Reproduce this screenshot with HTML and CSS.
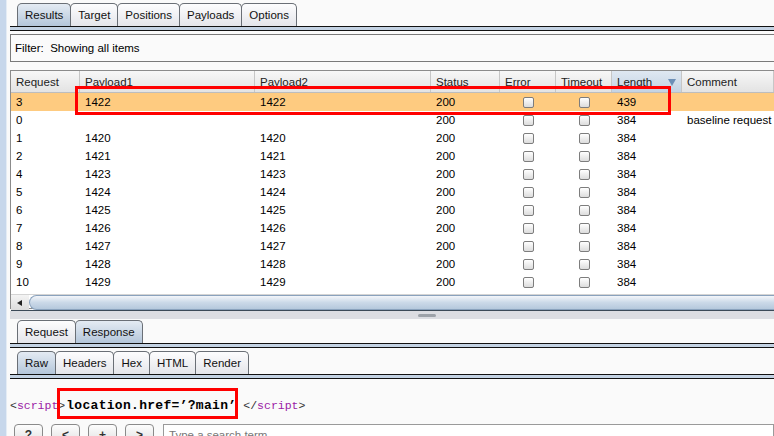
FILE: index.html
```html
<!DOCTYPE html>
<html>
<head>
<meta charset="utf-8">
<link rel="stylesheet" href="styles.css">
</head>
<body>
<div class="app">
  <div class="strip"></div>
  <div class="main">
    <div class="tabbar top">
      <div class="tab sel">Results</div>
      <div class="tab">Target</div>
      <div class="tab">Positions</div>
      <div class="tab">Payloads</div>
      <div class="tab">Options</div>
    </div>
    <div class="band"></div>
    <div class="filter">Filter:&nbsp; Showing all items</div>
    <div class="table">
      <div class="hl-box"></div>
      <div class="row head">
        <div class="c">Request</div><div class="c">Payload1</div><div class="c">Payload2</div><div class="c">Status</div><div class="c">Error</div><div class="c">Timeout</div><div class="c sorted">Length<span class="arrow"></span></div><div class="c">Comment</div>
      </div>
      <div class="row selrow"><div class="c">3</div><div class="c">1422</div><div class="c">1422</div><div class="c">200</div><div class="c ck"><span class="box"></span></div><div class="c ck"><span class="box"></span></div><div class="c">439</div><div class="c"></div></div>
      <div class="row"><div class="c">0</div><div class="c"></div><div class="c"></div><div class="c">200</div><div class="c ck"><span class="box"></span></div><div class="c ck"><span class="box"></span></div><div class="c">384</div><div class="c">baseline request</div></div>
      <div class="row"><div class="c">1</div><div class="c">1420</div><div class="c">1420</div><div class="c">200</div><div class="c ck"><span class="box"></span></div><div class="c ck"><span class="box"></span></div><div class="c">384</div><div class="c"></div></div>
      <div class="row"><div class="c">2</div><div class="c">1421</div><div class="c">1421</div><div class="c">200</div><div class="c ck"><span class="box"></span></div><div class="c ck"><span class="box"></span></div><div class="c">384</div><div class="c"></div></div>
      <div class="row"><div class="c">4</div><div class="c">1423</div><div class="c">1423</div><div class="c">200</div><div class="c ck"><span class="box"></span></div><div class="c ck"><span class="box"></span></div><div class="c">384</div><div class="c"></div></div>
      <div class="row"><div class="c">5</div><div class="c">1424</div><div class="c">1424</div><div class="c">200</div><div class="c ck"><span class="box"></span></div><div class="c ck"><span class="box"></span></div><div class="c">384</div><div class="c"></div></div>
      <div class="row"><div class="c">6</div><div class="c">1425</div><div class="c">1425</div><div class="c">200</div><div class="c ck"><span class="box"></span></div><div class="c ck"><span class="box"></span></div><div class="c">384</div><div class="c"></div></div>
      <div class="row"><div class="c">7</div><div class="c">1426</div><div class="c">1426</div><div class="c">200</div><div class="c ck"><span class="box"></span></div><div class="c ck"><span class="box"></span></div><div class="c">384</div><div class="c"></div></div>
      <div class="row"><div class="c">8</div><div class="c">1427</div><div class="c">1427</div><div class="c">200</div><div class="c ck"><span class="box"></span></div><div class="c ck"><span class="box"></span></div><div class="c">384</div><div class="c"></div></div>
      <div class="row"><div class="c">9</div><div class="c">1428</div><div class="c">1428</div><div class="c">200</div><div class="c ck"><span class="box"></span></div><div class="c ck"><span class="box"></span></div><div class="c">384</div><div class="c"></div></div>
      <div class="row"><div class="c">10</div><div class="c">1429</div><div class="c">1429</div><div class="c">200</div><div class="c ck"><span class="box"></span></div><div class="c ck"><span class="box"></span></div><div class="c">384</div><div class="c"></div></div>
      <div class="hscroll">
        <div class="sbtn"><svg width="8" height="8" viewBox="0 0 8 8"><path d="M1 4 L6 1 L6 7 Z" fill="#222"/></svg></div>
        <div class="thumb"></div>
      </div>
    </div>
    <div class="splitter"><span class="grip"></span></div>
    <div class="tabbar sub">
      <div class="tab">Request</div>
      <div class="tab sel">Response</div>
    </div>
    <div class="band"></div>
    <div class="tabbar sub2">
      <div class="tab sel">Raw</div>
      <div class="tab">Headers</div>
      <div class="tab">Hex</div>
      <div class="tab">HTML</div>
      <div class="tab">Render</div>
    </div>
    <div class="band"></div>
    <div class="code">
      <span class="p">&lt;</span><span class="tag">script</span><span class="p">&gt;</span><span class="js">location.href=’?main’</span> <span class="p">&lt;/</span><span class="tag">script</span><span class="p">&gt;</span>
      <div class="hl-code"></div>
    </div>
    <div class="bottom">
      <div class="btn">?</div>
      <div class="btn">&lt;</div>
      <div class="btn">+</div>
      <div class="btn">&gt;</div>
      <div class="search">Type a search term</div>
    </div>
  </div>
</div>
</body>
</html>
```

FILE: styles.css
```css
* { box-sizing: border-box; }
html, body { margin: 0; padding: 0; }
body {
  width: 774px; height: 436px; overflow: hidden;
  background: #fafafa;
  font-family: "Liberation Sans", Arial, sans-serif;
  font-size: 12px; color: #000;
}
.app { display: flex; height: 436px; }
.strip { width: 7px; flex: none; background: #c7d7eb; border-right: 1px solid #e4ecf5; }
.main { flex: 1; padding-left: 3px; display: flex; flex-direction: column; min-width: 0; }

.tabbar { display: flex; flex: none; padding-left: 7px; height: 23px; align-items: flex-end; }
.tabbar.top { margin-top: 3px; }
.tab {
  height: 23px; padding: 0 7px; line-height: 22px;
  border: 1px solid #6a6f76; border-bottom: none;
  border-radius: 5px 5px 0 0;
  background: linear-gradient(#fdfdfe, #e4e5ea);
  margin-right: -1px; font-size: 11.5px; color: #111;
}
.tab.sel { background: linear-gradient(#e4ebf3, #b4c6da); }
.band { flex: none; height: 5px; border-top: 1px solid #111; border-bottom: 1px solid #111; background: #c3d2e3; }

.filter {
  flex: none;
  margin-top: 3px; height: 28px; line-height: 26px;
  border: 1px solid #7a7a7a; border-right: none;
  padding-left: 4px; font-size: 11.5px; background: #fafafa;
}
.table {
  flex: none;
  position: relative;
  margin-top: 8px; border: 1px solid #8b8b8b; border-right: none;
  background: #fff; height: 239px;
}
.row {
  display: grid;
  grid-template-columns: 69px 175px 176px 69px 56px 56px 70px 1fr;
  height: 18px; align-items: center;
}
.row .c { padding-left: 5px; white-space: nowrap; overflow: hidden; font-size: 11.5px; }
.row.head { height: 22px; background: linear-gradient(#f7f7f7, #e3e3e3); border-bottom: 1px solid #bdbdbd; }
.row.head .c { height: 21px; line-height: 22px; border-right: 1px solid #c6c6c6; color: #222; }
.row.head .c.sorted { background: linear-gradient(#dfe8f2, #c4d3e3); position: relative; }
.arrow { position: absolute; right: 5px; top: 8px; width: 0; height: 0; border-left: 4px solid transparent; border-right: 4px solid transparent; border-top: 7px solid #6d8fb6; }
.selrow { background: #fecb80; }
.ck { display: flex; justify-content: center; padding-left: 0 !important; }
.box {
  width: 11px; height: 11px; border: 1px solid #7d7d7d; border-radius: 2px;
  background: linear-gradient(#ffffff, #dcdcdc);
  margin-left: 1px;
}
.hscroll { display: flex; height: 17px; margin-top: 3px; border-top: 1px solid #d4d4d4; border-bottom: 1px solid #3c4a58; }
.sbtn { width: 18px; display: flex; align-items: center; justify-content: center; background: linear-gradient(#f4f4f4, #dcdcdc); }
.thumb { flex: 1; border-radius: 8px 0 0 8px; border: 1px solid #8aa2bd; border-right: none; background: linear-gradient(#f3f6fa, #cbd9e8 50%, #b5c8dc); }
.hl-box { position: absolute; left: 64px; top: 15px; width: 596px; height: 29px; border: 3px solid #ff0000; z-index: 2; }

.splitter { flex: none; height: 8px; margin-top: 2px; background: #dcdde2; position: relative; }
.grip { position: absolute; left: 408px; top: 3px; width: 18px; height: 3px; border-radius: 2px; background: #9da2a9; }
.tabbar.sub { margin-top: 1px; }
.tabbar.sub2 { margin-top: 3px; }

.code { flex: none; position: relative; height: 45px; padding-top: 19px; font-family: "Liberation Mono", monospace; font-size: 11.5px; white-space: nowrap; }
.p { color: #333; }
.tag { color: #9a1aa6; }
.js { font-weight: bold; color: #000; font-size: 13px; letter-spacing: 0.3px; margin-left: 1px; }
.hl-code { position: absolute; left: 47px; top: 9px; width: 181px; height: 31px; border: 3px solid #ff0000; }

.bottom { display: flex; align-items: flex-start; margin-top: 0; padding-left: 4px; gap: 8px; }
.btn { flex: none; width: 29px; height: 20px; border: 1px solid #8a8a8a; border-radius: 4px; background: linear-gradient(#fdfdfd, #e2e2e2); text-align: center; font-weight: bold; line-height: 20px; color: #333; }
.search { flex: 1; margin-left: 1px; height: 20px; border: 1px solid #9a9a9a; background: #fff; padding-left: 5px; line-height: 20px; color: #777; font-size: 11.5px; }
```
